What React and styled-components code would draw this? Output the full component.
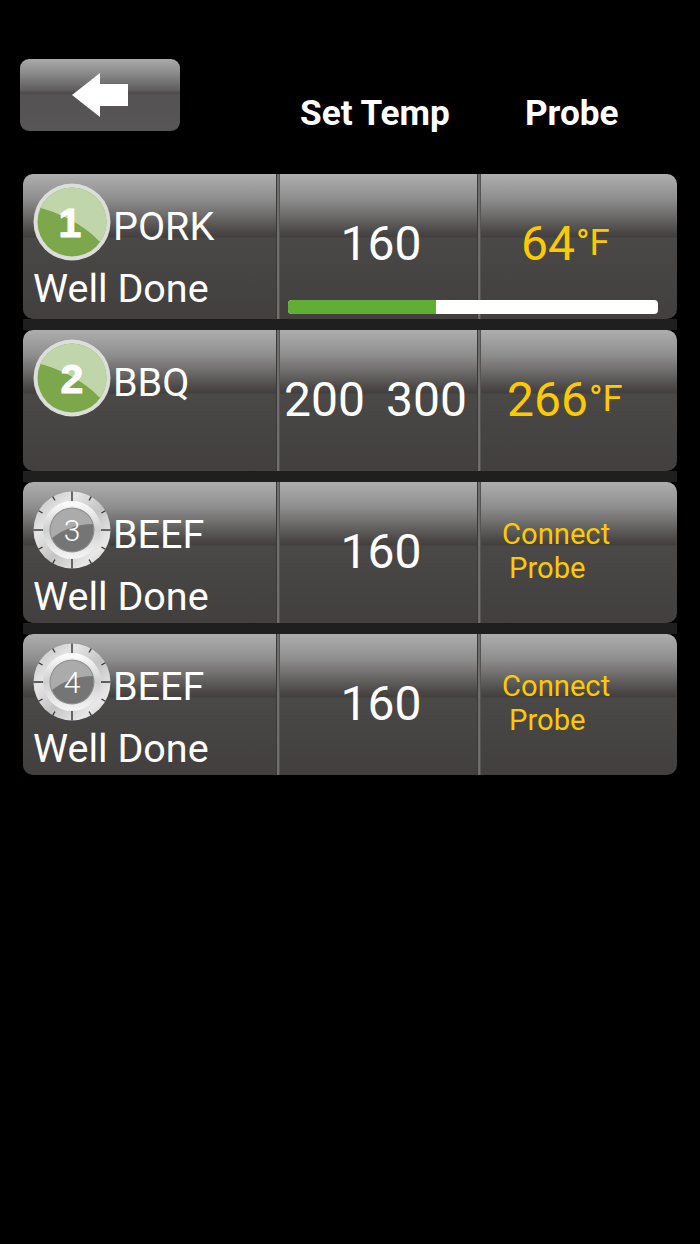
import * as React from "react"
import styled, { createGlobalStyle } from "styled-components"

const GlobalStyle = createGlobalStyle`
  html, body {
    margin: 0;
    background: #000;
  }
  body {
    font-family: Roboto, "Liberation Sans", sans-serif;
  }
`

const Page = styled.div`
  width: 700px;
  height: 1244px;
  background: #000;
  overflow: hidden;
  padding-top: 59px;
  box-sizing: border-box;
`

const Header = styled.header`
  display: flex;
  align-items: flex-start;
  height: 115px;
  padding-left: 20px;
`

const BackButton = styled.button`
  width: 160px;
  height: 72px;
  padding: 0;
  border: 0;
  border-radius: 9px;
  display: flex;
  align-items: center;
  justify-content: center;
  background: linear-gradient(
    180deg,
    #a9aaaa 0,
    #8b8b8b 14px,
    #5f5d5d 31px,
    #4c4a4a 34px,
    #545253 36px,
    #585657 100%
  );
`

const HeaderTitle = styled.div`
  margin-top: 34px;
  margin-left: ${(p) => p.$left}px;
  color: #fff;
  font-size: 35.2px;
  font-weight: 700;
  line-height: 40px;
`

const List = styled.div`
  margin-left: 23px;
  width: 654px;
`

const Strip = styled.div`
  height: 11px;
  background: #1f1f1f;
`

const Row = styled.div`
  position: relative;
  display: grid;
  grid-template-columns: 253px 4px 197px 4px 196px;
  height: ${(p) => p.$height}px;
  border-radius: 10px;
  overflow: hidden;
  background: linear-gradient(
    180deg,
    #aeaeae 0,
    #8e8e8e 25px,
    #666463 45px,
    #4a4746 58px,
    #423f3e 63px,
    #4a4948 64px,
    #423f3e 100%
  );
`

const Divider = styled.div`
  background: linear-gradient(90deg, #3b3938 0 1px, #716f6e 1px 3px, #565453 3px 4px);
`

const NameCell = styled.div`
  display: flex;
  flex-direction: column;
  padding: 9px 0 0 10px;
`

const NameLine = styled.div`
  display: flex;
  align-items: center;
  gap: 2px;
  height: 78px;
`

const Name = styled.span`
  color: #fff;
  font-size: 39.5px;
  line-height: 44px;
  margin-top: 10px;
`

const Doneness = styled.div`
  color: #fff;
  font-size: 39.5px;
  line-height: 44px;
  margin-top: 6px;
`

const TempCell = styled.div`
  display: flex;
  justify-content: center;
  gap: 21px;
  padding-top: 42px;
  padding-left: ${(p) => p.$left}px;
  padding-right: ${(p) => p.$right}px;
  color: #fff;
  font-size: 48px;
  line-height: 56px;
`

const ProbeCell = styled.div`
  padding-top: 41px;
  padding-left: ${(p) => p.$left}px;
  color: #fdca00;
  font-size: 48px;
  line-height: 56px;
`

const Unit = styled.span`
  font-size: 36.5px;
  margin-left: 1px;
  vertical-align: 5px;
`

const ConnectText = styled.div`
  padding: 35px 0 0 21px;
  color: #fdca00;
  font-size: 29.2px;
  line-height: 34px;
`

const ConnectLine = styled.div`
  padding-left: ${(p) => p.$indent || 0}px;
`

const Progress = styled.div`
  position: absolute;
  left: 265px;
  bottom: 5px;
  width: 370px;
  height: 14px;
  border-radius: 4px;
  overflow: hidden;
  background: #fff;
`

const ProgressFill = styled.div`
  height: 100%;
  background: #60ae33;
`

const GreenDigit = styled.text`
  font-family: "Liberation Sans", sans-serif;
  font-weight: 700;
  font-size: 41px;
  fill: #fff;
  stroke: #fff;
  stroke-width: 1px;
  text-anchor: middle;
`

const DialDigit = styled.text`
  font-family: Roboto, sans-serif;
  font-weight: 300;
  font-size: 30px;
  fill: #fff;
  text-anchor: middle;
`

function BackArrow() {
  return (
    <svg width="56" height="44" viewBox="0 0 56 44" aria-hidden="true">
      <path d="M0 22 L28 0 L28 11 L56 11 L56 33 L28 33 L28 44 Z" fill="#fff" />
    </svg>
  )
}

function GreenBadge({ n }) {
  return (
    <svg width="78" height="78" viewBox="0 0 78 78" aria-hidden="true">
      <defs>
        <clipPath id={`disc${n}`}>
          <circle cx="39" cy="39" r="34.5" />
        </clipPath>
      </defs>
      <circle cx="39" cy="39" r="38.5" fill="#dcded9" />
      <circle cx="39" cy="39" r="34.5" fill="#7da74b" />
      <path
        d="M4 24 C 25 29, 50 41, 66 58 L 80 60 L 80 -4 L 4 -4 Z"
        fill="#c1d5aa"
        clipPath={`url(#disc${n})`}
      />
      <GreenDigit x={n === 1 ? 37 : 39} y="53.5">
        {n}
      </GreenDigit>
    </svg>
  )
}

const ticks = Array.from({ length: 12 }, (_, i) => i * 30)

function DialBadge({ n }) {
  return (
    <svg width="78" height="78" viewBox="0 0 78 78" aria-hidden="true">
      <defs>
        <linearGradient id={`rim${n}`} x1="0" y1="0" x2="1" y2="1">
          <stop offset="0" stopColor="#bcbcbc" />
          <stop offset="0.3" stopColor="#e6e6e6" />
          <stop offset="0.55" stopColor="#c4c4c4" />
          <stop offset="0.8" stopColor="#e8e8e8" />
          <stop offset="1" stopColor="#c2c2c2" />
        </linearGradient>
        <linearGradient id={`ring${n}`} x1="0" y1="0" x2="0" y2="1">
          <stop offset="0" stopColor="#ffffff" />
          <stop offset="0.5" stopColor="#cfcfcf" />
          <stop offset="1" stopColor="#f7f7f7" />
        </linearGradient>
        <clipPath id={`face${n}`}>
          <circle cx="39" cy="39" r="21.5" />
        </clipPath>
      </defs>
      <circle cx="39" cy="39" r="38.5" fill={`url(#rim${n})`} />
      {ticks.map((a) => (
        <line
          key={a}
          x1="39"
          y1="0.5"
          x2="39"
          y2={a % 90 === 0 ? 10.5 : 5}
          stroke="#333"
          strokeWidth={a % 90 === 0 ? 1.4 : 1.2}
          transform={`rotate(${a} 39 39)`}
        />
      ))}
      <circle cx="39" cy="39" r="29" fill={`url(#ring${n})`} />
      <circle cx="39" cy="39" r="22.5" fill="#8c8c8c" />
      <circle cx="39" cy="39" r="21.5" fill="#ababab" />
      <path
        d="M18 48 C 30 38, 44 33, 62 33 L 62 62 L 18 62 Z"
        fill="#767575"
        clipPath={`url(#face${n})`}
      />
      <DialDigit x="39" y="50">
        {n}
      </DialDigit>
    </svg>
  )
}

function Connect() {
  return (
    <ConnectText>
      <ConnectLine>Connect</ConnectLine>
      <ConnectLine $indent={7}>Probe</ConnectLine>
    </ConnectText>
  )
}

function ProbeRow({ height = 141, badge, name, doneness, temps, tempLeft = 5, tempRight = 0, probe, progress }) {
  return (
    <Row $height={height}>
      <NameCell>
        <NameLine>
          {badge}
          <Name>{name}</Name>
        </NameLine>
        {doneness && <Doneness>{doneness}</Doneness>}
      </NameCell>
      <Divider />
      <TempCell $left={tempLeft} $right={tempRight}>
        {temps.map((t) => (
          <span key={t}>{t}</span>
        ))}
      </TempCell>
      <Divider />
      {probe}
      {progress != null && (
        <Progress>
          <ProgressFill style={{ width: `${progress}%` }} />
        </Progress>
      )}
    </Row>
  )
}

export default function App() {
  return (
    <Page>
      <GlobalStyle />
      <Header>
        <BackButton aria-label="Back">
          <BackArrow />
        </BackButton>
        <HeaderTitle $left={120}>Set Temp</HeaderTitle>
        <HeaderTitle $left={75}>Probe</HeaderTitle>
      </Header>
      <List>
        <ProbeRow
          height={145}
          badge={<GreenBadge n={1} />}
          name="PORK"
          doneness="Well Done"
          temps={["160"]}
          progress={40}
          probe={
            <ProbeCell $left={40}>
              64<Unit>°F</Unit>
            </ProbeCell>
          }
        />
        <Strip />
        <ProbeRow
          badge={<GreenBadge n={2} />}
          name="BBQ"
          temps={["200", "300"]}
          tempLeft={0}
          tempRight={6}
          probe={
            <ProbeCell $left={26}>
              266<Unit>°F</Unit>
            </ProbeCell>
          }
        />
        <Strip />
        <ProbeRow badge={<DialBadge n={3} />} name="BEEF" doneness="Well Done" temps={["160"]} probe={<Connect />} />
        <Strip />
        <ProbeRow badge={<DialBadge n={4} />} name="BEEF" doneness="Well Done" temps={["160"]} probe={<Connect />} />
      </List>
    </Page>
  )
}
